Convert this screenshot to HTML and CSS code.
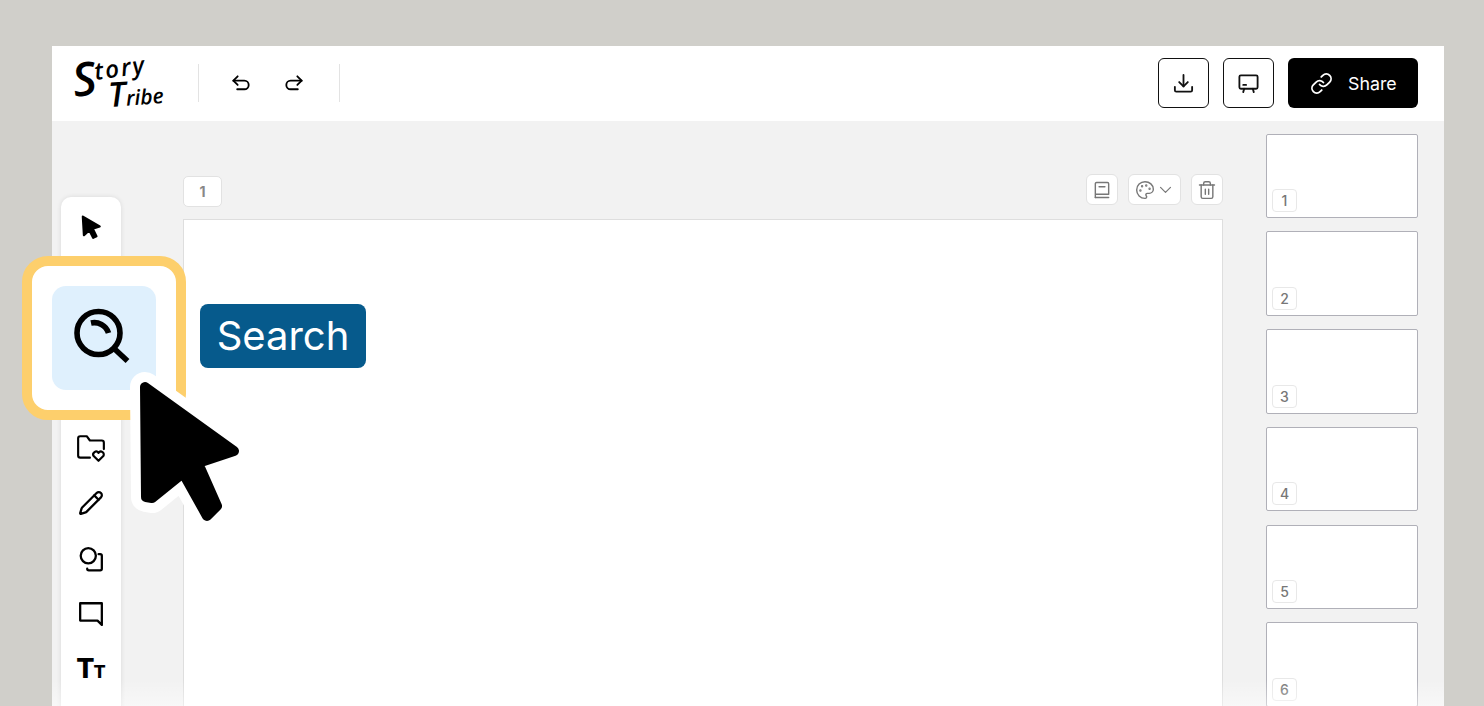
FILE: index.html
```html
<!DOCTYPE html>
<html lang="en">
<head>
    <meta charset="utf-8" />
    <meta name="viewport" content="width=device-width, initial-scale=1" />
    <title>Story Tribe</title>
    <link rel="stylesheet" href="styles.css">
</head>
<body>
    <div class="app">
        <header class="topbar">
            <div class="logo">
                <span class="logo-story"><span class="logo-cap">S</span><span class="logo-rest">tory</span></span>
                <span class="logo-tribe"><span class="logo-cap">T</span>ribe</span>
            </div>
            <span class="divider"></span>
            <div class="history">
                <svg class="icon" viewBox="0 0 24 24"><path d="M8 4.500 3.500 9 8 13.500"/><path d="M3.500 9H15a4.500 4.500 0 0 1 0 9H7.500"/></svg>
                <svg class="icon" viewBox="0 0 24 24"><path d="M16 4.500 20.500 9 16 13.500"/><path d="M20.500 9H9a4.500 4.500 0 0 0 0 9h7.500"/></svg>
            </div>
            <span class="divider"></span>
            <div class="actions">
                <button class="outline-button">
                    <svg class="icon" viewBox="0 0 24 24"><path d="M12 3v12"/><path d="m7.500 10.500 4.500 4.500 4.500-4.500"/><path d="M3 15.500V19a1.500 1.500 0 0 0 1.500 1.500h15A1.500 1.500 0 0 0 21 19v-3.500"/></svg>
                </button>
                <button class="outline-button">
                    <svg class="icon" viewBox="0 0 24 24"><rect x="2.500" y="3.500" width="19" height="14" rx="1.500"/><path d="M6.500 13.500h3"/><path d="m7.500 17.500-1 3.500M16.500 17.500l1 3.500"/></svg>
                </button>
                <button class="share-button">
                    <svg class="icon" viewBox="0 0 24 24"><path d="M10 13a5 5 0 0 0 7.540.54l3-3a5 5 0 0 0-7.070-7.070l-1.720 1.710"/><path d="M14 11a5 5 0 0 0-7.540-.54l-3 3a5 5 0 0 0 7.070 7.070l1.710-1.710"/></svg>
                    Share
                </button>
            </div>
        </header>

        <main class="workspace">
            <nav class="toolbar">
                <div class="tool">
                    <svg class="tool-icon" viewBox="0 0 24 24"><path class="solid" d="M4.500 2.500 20 11.500l-6.500 2 3.500 7-3 1.500-3.500-7-5 4.500z"/></svg>
                </div>
                <div class="tool"></div>
                <div class="tool"></div>
                <div class="tool"></div>
                <div class="tool">
                    <svg class="tool-icon folder-icon" viewBox="0 0 28 28"><path d="M13 23H4a2 2 0 0 1-2-2V5a2 2 0 0 1 2-2h6l3 4h11a2 2 0 0 1 2 2v6"/><path d="M21 26l-4.500-4.500a2.500 2.500 0 0 1 4.500-3 2.500 2.500 0 0 1 4.500 3z"/></svg>
                </div>
                <div class="tool">
                    <svg class="tool-icon" viewBox="0 0 24 24"><path d="M21.170 6.810a1 1 0 0 0-3.980-3.990L3.840 16.170a2 2 0 0 0-.5.830l-1.320 4.360a.5.500 0 0 0 .62.620l4.350-1.320a2 2 0 0 0 .83-.5z"/><path d="m15 5 4 4"/></svg>
                </div>
                <div class="tool">
                    <svg class="tool-icon" viewBox="0 0 24 24"><circle cx="9.500" cy="9" r="7"/><path d="M19 7.500h1.500a1.500 1.500 0 0 1 1.500 1.500v12a1.500 1.500 0 0 1-1.500 1.500H10a1.500 1.500 0 0 1-1.500-1.500"/></svg>
                </div>
                <div class="tool tool-comment">
                    <svg class="tool-icon" viewBox="0 0 24 24"><path d="M2 3h20v20l-4-4H2z"/></svg>
                </div>
                <div class="tool tool-text"><span class="big-t">T</span><span class="small-t">T</span></div>
            </nav>

            <section class="stage">
                <div class="stage-head">
                    <span class="page-label">1</span>
                    <div class="stage-tools">
                        <span class="mini-button">
                            <svg class="mini-icon" viewBox="0 0 24 24"><path d="M4 21V4.500A1.500 1.500 0 0 1 5.500 3h13A1.500 1.500 0 0 1 20 4.500V17H4"/><path d="M4 21h16"/><path d="M8.500 8h7"/></svg>
                        </span>
                        <span class="mini-button mini-wide">
                            <svg class="mini-icon" viewBox="0 0 24 24"><path d="M12 22a1 1 0 0 1 0-20 10 9 0 0 1 10 9 5 5 0 0 1-5 5h-2.250a1.750 1.750 0 0 0-1.400 2.800l.3.4a1.750 1.750 0 0 1-1.400 2.800z"/><circle cx="13.500" cy="6.500" r=".6"/><circle cx="17.500" cy="10.500" r=".6"/><circle cx="6.500" cy="12.500" r=".6"/><circle cx="8.500" cy="7.500" r=".6"/></svg>
                            <svg class="mini-icon" viewBox="0 0 24 24"><path d="m5 9 7 7 7-7"/></svg>
                        </span>
                        <span class="mini-button">
                            <svg class="mini-icon" viewBox="0 0 24 24"><path d="M3 6h18"/><path d="M19 6v14a2 2 0 0 1-2 2H7a2 2 0 0 1-2-2V6"/><path d="M8 6V4a2 2 0 0 1 2-2h4a2 2 0 0 1 2 2v2"/><path d="M10 11v6M14 11v6"/></svg>
                        </span>
                    </div>
                </div>
                <div class="page"></div>
            </section>

            <aside class="thumbs">
                <div class="thumb"><span class="thumb-label">1</span></div>
                <div class="thumb"><span class="thumb-label">2</span></div>
                <div class="thumb"><span class="thumb-label">3</span></div>
                <div class="thumb"><span class="thumb-label">4</span></div>
                <div class="thumb"><span class="thumb-label">5</span></div>
                <div class="thumb"><span class="thumb-label">6</span></div>
            </aside>
        </main>
        <div class="bottom-fade"></div>
    </div>

    <!-- highlighted tool, sits over the toolbar -->
    <div class="callout">
        <div class="callout-inner">
            <svg class="search-icon" viewBox="0 0 60 60"><circle cx="24.500" cy="25" r="21.500"/><path d="M39 39.500l14.500 13.500"/><path d="M17 15c7-1.500 15 2 17.500 10"/></svg>
        </div>
    </div>
    <div class="search-tip">Search</div>

    <svg class="big-cursor" viewBox="125 370 130 165">
        <path class="cursor-edge" d="M145 387 234 451 198 463 217 506 207 516 183 473 152 498 146 497z"/>
        <path class="cursor-fill" d="M145 387 234 451 198 463 217 506 207 516 183 473 152 498 146 497z"/>
    </svg>
</body>
</html>
```

FILE: styles.css
```css
* {
    margin: 0;
    padding: 0;
    box-sizing: border-box;
}

html, body {
    height: 100vh;
    overflow: hidden;
}

body {
    font-family: 'Inter', 'Liberation Sans', sans-serif;
    background: #d0cfca;
    padding: 46px 40px 0 52px;
    position: relative;
}

.app {
    height: 660px;
    overflow: hidden;
    background: #f2f2f2;
    position: relative;
}

/* top bar */
.topbar {
    height: 75px;
    padding-bottom: 1px;
    background: white;
    display: flex;
    align-items: center;
}

.logo {
    width: 146px;
    height: 74px;
    position: relative;
    color: black;
    font-family: 'Open Sans', sans-serif;
    font-style: italic;
    font-weight: 600;
    line-height: 1;
    white-space: nowrap;
}

.logo-story {
    position: absolute;
    left: 20px;
    top: 5px;
    transform: rotate(-8deg);
}

.logo-story .logo-cap {
    font-size: 46px;
    letter-spacing: -1px;
}

.logo-rest {
    font-size: 24px;
    letter-spacing: 2px;
    vertical-align: 14px;
}

.logo-tribe {
    position: absolute;
    left: 56px;
    top: 29px;
    font-size: 21px;
    transform: rotate(-4deg);
}

.logo-tribe .logo-cap {
    font-size: 34px;
}

.divider {
    width: 1px;
    height: 38px;
    background: #e3e3e3;
}

.history {
    display: flex;
    gap: 29px;
    padding: 0 34px 0 31px;
}

.icon {
    width: 23px;
    height: 23px;
    fill: none;
    stroke: currentColor;
    stroke-width: 1.9;
    stroke-linecap: round;
    stroke-linejoin: round;
    display: block;
}

.actions {
    margin-left: auto;
    padding-right: 26px;
    display: flex;
    gap: 14px;
}

.outline-button {
    width: 51px;
    height: 50px;
    background: white;
    border: 1px solid #111;
    border-radius: 6px;
    color: #111;
    display: flex;
    align-items: center;
    justify-content: center;
}

.share-button {
    width: 130px;
    height: 50px;
    background: black;
    border: none;
    border-radius: 6px;
    color: white;
    font-family: inherit;
    font-size: 17.8px;
    display: flex;
    align-items: center;
    gap: 15px;
    padding-left: 22px;
}

/* main area */
.workspace {
    display: flex;
    align-items: flex-start;
    padding-left: 9px;
}

.toolbar {
    width: 60px;
    height: 600px;
    margin-top: 76px;
    padding-top: 2.5px;
    background: white;
    border-radius: 10px;
    box-shadow: 0 0 5px rgba(0, 0, 0, 0.1);
}

.tool {
    height: 55.25px;
    display: flex;
    align-items: center;
    justify-content: center;
}

.tool-icon {
    width: 26px;
    height: 26px;
    fill: none;
    stroke: black;
    stroke-width: 2.1;
    stroke-linejoin: round;
    stroke-linecap: round;
}

.tool-icon .solid {
    fill: black;
}

.folder-icon {
    width: 30px;
    height: 30px;
    stroke-width: 2;
}

.tool-comment {
    padding-bottom: 2px;
}

.tool-text {
    align-items: baseline;
    padding-top: 13px;
    font-weight: 800;
    color: black;
    line-height: 1;
}

.big-t {
    font-size: 27px;
    letter-spacing: -1px;
}

.small-t {
    font-size: 18px;
}

.stage {
    width: 1040px;
    margin: 53px 43px 0 62px;
}

.stage-head {
    height: 45px;
    display: flex;
    justify-content: space-between;
    align-items: flex-start;
}

.page-label {
    width: 39px;
    height: 31px;
    margin-top: 2px;
    background: white;
    border: 1px solid #e2e2e2;
    border-radius: 5px;
    color: #888;
    font-size: 14px;
    font-weight: 700;
    display: flex;
    align-items: center;
    justify-content: center;
}

.stage-tools {
    display: flex;
    gap: 10px;
}

.mini-button {
    width: 32px;
    height: 31px;
    background: white;
    border: 1px solid #e2e2e2;
    border-radius: 6px;
    display: flex;
    align-items: center;
    justify-content: center;
    gap: 2px;
}

.mini-wide {
    width: 53px;
}

.mini-icon {
    width: 20px;
    height: 20px;
    fill: none;
    stroke: #777;
    stroke-width: 1.7;
    stroke-linecap: round;
    stroke-linejoin: round;
}

.mini-wide .mini-icon:last-child {
    width: 17px;
    height: 17px;
}

.page {
    height: 600px;
    background: white;
    border: 1px solid #dedede;
}

.thumbs {
    width: 152px;
    margin-top: 12.5px;
    display: flex;
    flex-direction: column;
    gap: 13.3px;
}

.thumb {
    height: 84.5px;
    flex-shrink: 0;
    background: white;
    border: 1.5px solid #b0b0b8;
    border-radius: 2px;
    display: flex;
    align-items: flex-end;
    padding: 0 0 5px 5px;
}

.thumb-label {
    width: 25px;
    height: 23px;
    background: white;
    border: 1.5px solid #e8e8e8;
    border-radius: 4px;
    color: #777;
    font-size: 14px;
    font-weight: 500;
    display: flex;
    align-items: center;
    justify-content: center;
}

/* overlays */
.bottom-fade {
    position: absolute;
    left: 0;
    right: 0;
    bottom: 0;
    height: 26px;
    background: linear-gradient(rgba(255, 255, 255, 0), rgba(255, 255, 255, 0.45));
}

.callout {
    position: absolute;
    left: 22px;
    top: 256px;
    width: 164px;
    height: 164px;
    background: white;
    border: 10px solid #fdcf6c;
    border-radius: 26px;
    display: flex;
    align-items: center;
    justify-content: center;
}

.callout-inner {
    width: 104px;
    height: 104px;
    background: #dff0fd;
    border-radius: 14px;
    display: flex;
    align-items: center;
    justify-content: center;
}

.search-icon {
    width: 60px;
    height: 60px;
    margin-top: -1px;
    fill: none;
    stroke: black;
    stroke-width: 5.6;
}

.search-tip {
    position: absolute;
    left: 200px;
    top: 304px;
    width: 166px;
    height: 64px;
    padding-bottom: 2px;
    background: #065a8c;
    border-radius: 8px;
    color: white;
    font-size: 40px;
    display: flex;
    align-items: center;
    justify-content: center;
}

.big-cursor {
    position: absolute;
    left: 125px;
    top: 370px;
    width: 130px;
    height: 165px;
}

.cursor-edge {
    fill: white;
    stroke: white;
    stroke-width: 30;
    stroke-linejoin: round;
}

.cursor-fill {
    fill: black;
    stroke: black;
    stroke-width: 10;
    stroke-linejoin: round;
}
```
